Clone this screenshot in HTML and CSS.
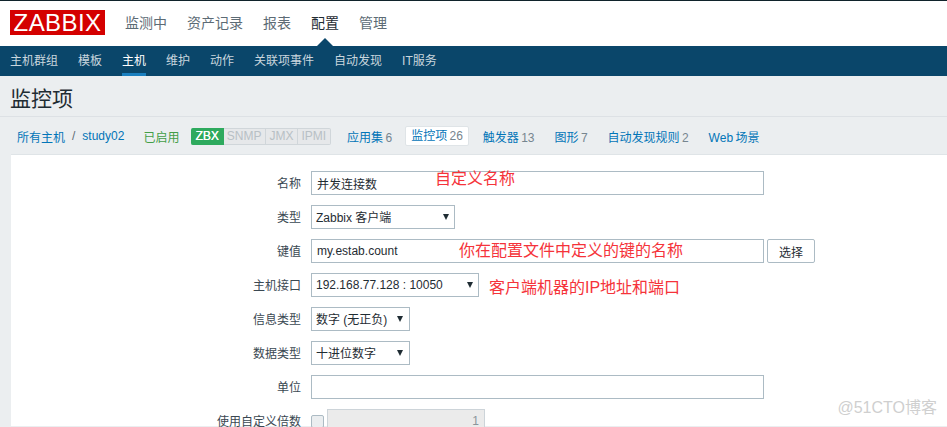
FILE: index.html
```html
<!DOCTYPE html>
<html lang="zh-CN">
  <head>
    <meta charset="UTF-8" />
    <meta name="viewport" content="width=device-width, initial-scale=1.0" />
    <title>监控项</title>
    <link rel="stylesheet" href="styles.css">
  </head>
  <body>
    <div class="top-strip"></div>
    <header class="main-header">
      <div class="logo">ZABBIX</div>
      <nav class="main-nav">
        <a>监测中</a>
        <a>资产记录</a>
        <a>报表</a>
        <a class="active">配置</a>
        <a>管理</a>
      </nav>
    </header>
    <nav class="sub-nav">
      <a>主机群组</a>
      <a>模板</a>
      <a class="active">主机</a>
      <a>维护</a>
      <a>动作</a>
      <a>关联项事件</a>
      <a>自动发现</a>
      <a>IT服务</a>
    </nav>

    <h1 class="page-title">监控项</h1>

    <div class="tabs">
      <a class="crumb">所有主机</a>
      <span class="slash">/</span>
      <a class="crumb host">study02</a>
      <span class="status">已启用</span>
      <div class="badges">
        <span class="badge on">ZBX</span>
        <span class="badge">SNMP</span>
        <span class="badge">JMX</span>
        <span class="badge">IPMI</span>
      </div>
      <div class="tab-list">
        <a class="tab">应用集 <em>6</em></a>
        <a class="tab active">监控项 <em>26</em></a>
        <a class="tab">触发器 <em>13</em></a>
        <a class="tab">图形 <em>7</em></a>
        <a class="tab">自动发现规则 <em>2</em></a>
        <a class="tab">Web 场景</a>
      </div>
    </div>

    <form class="item-form">
      <div class="row">
        <label>名称</label>
        <div class="field">
          <input class="wide" type="text" value="并发连接数" />
          <span class="note note-name">自定义名称</span>
        </div>
      </div>
      <div class="row">
        <label>类型</label>
        <div class="field">
          <div class="select w-type"><select><option>Zabbix 客户端</option></select></div>
        </div>
      </div>
      <div class="row">
        <label>键值</label>
        <div class="field">
          <input class="wide" type="text" value="my.estab.count" />
          <button type="button">选择</button>
          <span class="note note-key">你在配置文件中定义的键的名称</span>
        </div>
      </div>
      <div class="row">
        <label>主机接口</label>
        <div class="field">
          <div class="select w-host"><select><option>192.168.77.128 : 10050</option></select></div>
          <span class="note note-host">客户端机器的IP地址和端口</span>
        </div>
      </div>
      <div class="row">
        <label>信息类型</label>
        <div class="field">
          <div class="select w-info"><select><option>数字 (无正负)</option></select></div>
        </div>
      </div>
      <div class="row">
        <label>数据类型</label>
        <div class="field">
          <div class="select w-info"><select><option>十进位数字</option></select></div>
        </div>
      </div>
      <div class="row">
        <label>单位</label>
        <div class="field">
          <input class="wide" type="text" />
        </div>
      </div>
      <div class="row">
        <label>使用自定义倍数</label>
        <div class="field">
          <span class="check"></span>
          <input class="multiplier" type="text" value="1" disabled />
        </div>
      </div>
    </form>

    <div class="watermark">@51CTO博客</div>
  </body>
</html>
```

FILE: styles.css
```css
html,
body {
  height: 427px;
  overflow: hidden;
}
body {
  margin: 0;
  background: #ebeef0;
  color: #1f2c33;
  font-family: "Liberation Sans", Arial, "Noto Sans CJK SC", sans-serif;
  font-size: 12px;
  position: relative;
}
.top-strip {
  height: 1px;
  background: #10232b;
}
.main-header {
  height: 45px;
  background: #fff;
  display: flex;
  align-items: center;
  padding-left: 10px;
}
.logo {
  width: 95px;
  height: 25px;
  margin-top: -3px;
  background: #d40000;
  color: #fff;
  font-size: 24px;
  line-height: 25px;
  letter-spacing: 0.4px;
  text-align: center;
}
.main-nav {
  display: flex;
  gap: 20px;
  margin-left: 20px;
  margin-top: -4px;
  font-size: 14px;
  color: #5c6b75;
}
.main-nav .active {
  color: #1f2c33;
  position: relative;
}
.main-nav .active::after {
  content: "";
  position: absolute;
  left: 6px;
  top: 26px;
  border-left: 8px solid transparent;
  border-right: 8px solid transparent;
  border-bottom: 8px solid #0a466a;
}
.sub-nav {
  height: 30px;
  background: #0a466a;
  display: flex;
  gap: 20px;
  padding-left: 10px;
  color: #c9d6de;
  line-height: 30px;
}
.sub-nav .active {
  color: #fff;
  border-bottom: 3px solid #1a7fbf;
  height: 27px;
}
.page-title {
  margin: 0;
  height: 40px;
  padding: 0 0 0 10px;
  font-size: 21px;
  font-weight: 400;
  line-height: 46px;
  color: #1f2c33;
  border-bottom: 1px solid #dde1e5;
  box-sizing: content-box;
}
.tabs {
  height: 38px;
  display: flex;
  align-items: center;
  padding-left: 17px;
  box-sizing: border-box;
  color: #5c6b75;
}
.crumb,
.tab {
  color: #0275b8;
}
.slash {
  margin: 0 7px;
}
.status {
  margin-left: 19px;
  color: #429e47;
}
.badges {
  display: flex;
  margin-left: 12px;
  height: 17px;
}
.badge {
  padding: 0 4px 0 3px;
  line-height: 15px;
  color: #b8c0c5;
  background: #e6e8ea;
  border: 1px solid #d0d6da;
  border-left-width: 0;
}
.badge.on {
  color: #fff;
  background: #2eaa5e;
  border-color: #2eaa5e;
  border-radius: 2px 0 0 2px;
  padding: 0 4px;
  text-shadow: 0.3px 0 0 #fff;
}
.badge:last-child {
  border-radius: 0 2px 2px 0;
}
.tab-list {
  display: flex;
  align-items: center;
  gap: 20px;
  margin-left: 16px;
  word-spacing: -1px;
}
.tab em {
  font-style: normal;
  color: #76858f;
}
.tab.active {
  background: #fff;
  border: 1px solid #dfe4e7;
  border-radius: 2px;
  padding: 3px 5px;
  margin: 0 -6px 0 -7px;
  height: 20px;
  box-sizing: border-box;
  line-height: 13px;
}
.item-form {
  margin-left: 11px;
  height: 272px;
  padding-top: 16px;
  box-sizing: border-box;
  background: #fff;
  border-top: 1px solid #dfe4e7;
  margin-top: -1px;
}
.row {
  display: flex;
  align-items: center;
  gap: 10px;
  height: 24px;
  margin-bottom: 10px;
}
.row label {
  width: 290px;
  padding-bottom: 2px;
  text-align: right;
  color: #3a4852;
}
.field {
  display: flex;
  align-items: center;
  gap: 3px;
  position: relative;
  flex: 1;
}
input,
select,
button {
  font-family: inherit;
  font-size: 12px;
  color: #1f2c33;
  box-sizing: border-box;
  height: 24px;
  border: 1px solid #acbbc4;
  background: #fff;
  outline: none;
  border-radius: 0;
}
input {
  padding: 0 5px;
}
.wide {
  width: 453px;
}
button {
  width: 48px;
  border-radius: 2px;
  padding: 0;
}
.select {
  position: relative;
  display: inline-block;
}
.select select {
  appearance: none;
  width: 100%;
  padding: 2px 4px 0;
}
.select::after {
  content: "";
  position: absolute;
  right: 6px;
  top: 9px;
  border-left: 3px solid transparent;
  border-right: 3px solid transparent;
  border-top: 6px solid #1f2c33;
}
.w-type {
  width: 144px;
}
.w-host {
  width: 168px;
}
.w-host select {
  padding-top: 0;
}
.w-info {
  width: 99px;
}
.w-info::after {
  right: 7px;
}
.note {
  position: absolute;
  color: #f5333a;
  font-size: 16px;
  line-height: 20px;
  white-space: nowrap;
}
.note-name {
  left: 124px;
  top: -2px;
}
.note-key {
  left: 148px;
  top: 2px;
}
.note-host {
  left: 178px;
  top: 5px;
}
.check {
  width: 13px;
  height: 13px;
  box-sizing: border-box;
  border: 1px solid #acbbc4;
  border-radius: 2px;
  background: #ebeef0;
}
.multiplier {
  width: 158px;
  text-align: right;
  background: #ebebeb;
  border-color: #cdd4d9;
  color: #8a959c;
}
.watermark {
  position: absolute;
  right: 10px;
  bottom: 9px;
  font-size: 16px;
  color: #cfcfcf;
}
```
